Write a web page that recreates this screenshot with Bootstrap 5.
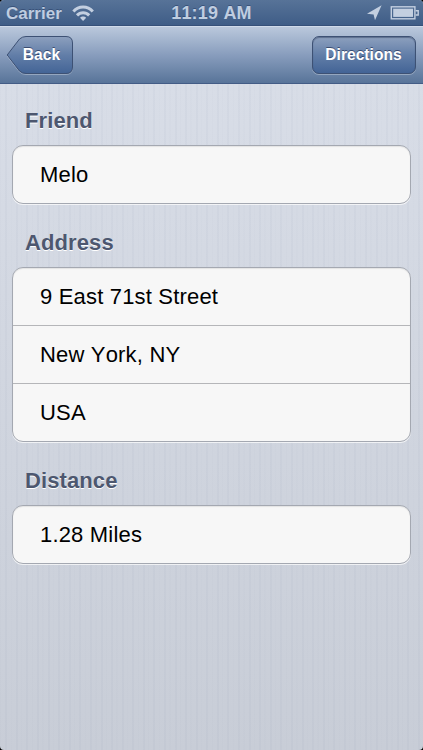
<!DOCTYPE html>
<html lang="en">
<head>
    <meta charset="UTF-8">
    <meta name="viewport" content="width=device-width, initial-scale=1.0">
    <title>Friend</title>
    <link href="https://cdn.jsdelivr.net/npm/bootstrap@5.3.2/dist/css/bootstrap.min.css" rel="stylesheet">
    <style>
        html {
            background: #000;
        }
        body {
            font-family: "Liberation Sans", Arial, sans-serif;
            font-kerning: none;
            background: transparent;
        }
        .screen {
            height: 750px;
            border-radius: 4px;
            background:
                repeating-linear-gradient(90deg, rgba(90, 105, 140, .015) 0 1.3px, transparent 1.3px 5.3px, rgba(90, 105, 140, .04) 5.3px 7.3px, transparent 7.3px 10.58px),
                linear-gradient(#d8dde7 84px, #c8cdd7 100%);
        }
        .status-bar {
            height: 26px;
            padding: 0 4px 0 6px;
            font-size: 17px;
            line-height: 27px;
            color: #bfcde0;
            text-shadow: 0 -1px 0 rgba(20, 40, 80, .4);
            background: linear-gradient(#577398, #3f5d87);
            border-bottom: 1px solid #365079;
        }
        .clock {
            font-size: 18px;
            letter-spacing: .2px;
        }
        .top-bar {
            height: 58px;
            padding: 0 7px 0 6px;
            background: linear-gradient(#bac8dc, #889dbd 50%, #587499);
            border-top: 1px solid #d0daea;
            border-bottom: 1px solid #435c86;
        }
        .bar-btn {
            height: 38px;
            padding: 0;
            font-size: 15.6px;
            line-height: 36px;
            color: #fff;
            text-shadow: 0 -1px 0 rgba(20, 35, 70, .6);
        }
        .bar-btn:hover {
            color: #fff;
        }
        .directions-btn {
            width: 104px;
            padding-right: 1px;
            border: 1px solid #3d5174;
            border-radius: 7px;
            background: linear-gradient(#8da0be, #627ea8 50%, #436496);
            box-shadow: inset 0 1px 1px rgba(35, 50, 85, .45), 0 1px 0 rgba(255, 255, 255, .3);
        }
        .back-btn {
            width: 68px;
            border: 0;
        }
        .back-label {
            padding-left: 3px;
            line-height: 38px;
        }
        .content {
            padding: 22px 12px 0;
        }
        .group-title {
            height: 30px;
            margin: 0 0 9px 13px;
            font-size: 22px;
            line-height: 30px;
            letter-spacing: .1px;
            color: #4d576f;
            text-shadow: 0 1px 0 #fff;
        }
        .group-list {
            margin-bottom: 24px;
            border: 1px solid #a4a8b1;
            border-radius: 11px;
            box-shadow: 0 1px 0 rgba(255, 255, 255, .7), inset 0 1px 1px rgba(0, 0, 0, .08);
            background: #f7f7f7;
        }
        .group-list .list-group-item {
            height: 58px;
            padding: 0 27px;
            font-size: 22px;
            line-height: 57px;
            letter-spacing: .18px;
            color: #000;
            background: transparent;
            border: 0;
        }
        .group-list .list-group-item + .list-group-item {
            border-top: 1px solid #b5b6b9;
        }
        .group-list .list-group-item:first-child {
            height: 57px;
        }
    </style>
</head>
<body>
    <div class="screen overflow-hidden">
        <div class="status-bar d-flex fw-bold position-relative">
            <span>Carrier</span>
            <svg class="ms-2 mt-1" width="26" height="18" viewBox="0 0 26 18">
                <g fill="none" stroke="#c3cfe0" stroke-width="3">
                    <path d="M3.4 7.4C8.6 1.6 17.6 1.6 22.8 7.4"/>
                    <path d="M7 11.4C10.4 7.8 15.8 7.8 19.2 11.4"/>
                </g>
                <path d="M10 13.8C11.6 12 14.6 12 16.2 13.8L13.1 17Z" fill="#c3cfe0"/>
            </svg>
            <span class="clock position-absolute top-0 start-50 translate-middle-x">11:19 AM</span>
            <svg class="ms-auto mt-1" width="54" height="18" viewBox="0 0 54 18">
                <path d="M16.6 1.3L2 9.8L8.6 10.5L10 16.3Z" fill="#c3cfe0"/>
                <rect x="26.3" y="2.8" width="23.6" height="12" fill="none" stroke="#c3cfe0" stroke-width="1.4"/>
                <rect x="28.2" y="4.7" width="19.8" height="8.2" fill="#c3cfe0"/>
                <path d="M50.6 6.7H53.2V11H50.6" fill="none" stroke="#c3cfe0" stroke-width="1.4"/>
            </svg>
        </div>

        <nav class="top-bar d-flex justify-content-between align-items-center">
            <button type="button" class="btn bar-btn back-btn fw-bold position-relative">
                <svg class="position-absolute top-0 start-0" width="68" height="40" viewBox="0 0 68 40">
                    <defs>
                        <linearGradient id="backFill" x1="0" y1="0" x2="0" y2="1">
                            <stop offset="0" stop-color="#8da0be"/>
                            <stop offset=".5" stop-color="#627ea8"/>
                            <stop offset="1" stop-color="#436496"/>
                        </linearGradient>
                    </defs>
                    <path d="M1.2 20L13.5 4Q16.5 1.5 20 1.5H60Q66.5 1.5 66.5 8V32Q66.5 38.5 60 38.5H20Q16.5 38.5 13.5 36Z" fill="none" stroke="#fff" stroke-opacity=".3"/>
                    <path d="M1.2 19L13.5 3Q16.5 .5 20 .5H60Q66.5 .5 66.5 7V31Q66.5 37.5 60 37.5H20Q16.5 37.5 13.5 35Z" fill="url(#backFill)" stroke="#3d5174"/>
                </svg>
                <span class="back-label position-relative">Back</span>
            </button>
            <button type="button" class="btn bar-btn directions-btn fw-bold">Directions</button>
        </nav>

        <main class="content">
            <h2 class="group-title fw-bold">Friend</h2>
            <ul class="list-group group-list">
                <li class="list-group-item">Melo</li>
            </ul>

            <h2 class="group-title fw-bold">Address</h2>
            <ul class="list-group group-list">
                <li class="list-group-item">9 East 71st Street</li>
                <li class="list-group-item">New York, NY</li>
                <li class="list-group-item">USA</li>
            </ul>

            <h2 class="group-title fw-bold">Distance</h2>
            <ul class="list-group group-list">
                <li class="list-group-item">1.28 Miles</li>
            </ul>
        </main>
    </div>

    <script src="https://cdn.jsdelivr.net/npm/bootstrap@5.3.2/dist/js/bootstrap.bundle.min.js"></script>
</body>
</html>
